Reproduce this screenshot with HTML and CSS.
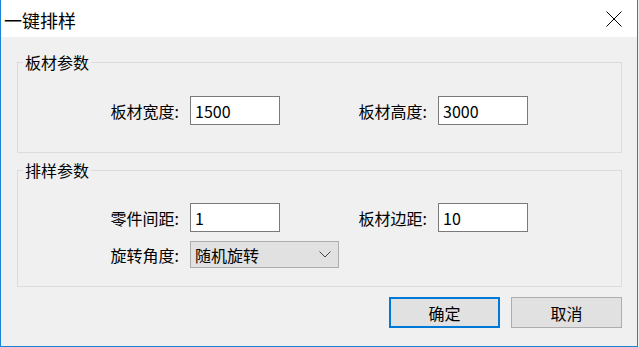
FILE: index.html
```html
<!DOCTYPE html>
<html lang="zh-CN">
<head>
<meta charset="UTF-8" />
<title>一键排样</title>
<link rel="stylesheet" href="styles.css">
</head>
<body>

<div class="window">
  <div class="titlebar">
    <span class="title">一键排样</span>
    <button class="close" aria-label="关闭">
      <svg width="16" height="16" viewBox="0 0 16 16">
        <path d="M0.5 0.5 L15.5 15.5 M15.5 0.5 L0.5 15.5" stroke="#000" stroke-width="1" fill="none" />
      </svg>
    </button>
  </div>

  <div class="content">
    <fieldset class="group group-sheet">
      <legend>板材参数</legend>
      <div class="fields">
        <label for="width">板材宽度:</label>
        <input id="width" type="text" value="1500">
        <label for="height">板材高度:</label>
        <input id="height" type="text" value="3000">
      </div>
    </fieldset>

    <fieldset class="group group-layout">
      <legend>排样参数</legend>
      <div class="fields">
        <label for="gap">零件间距:</label>
        <input id="gap" type="text" value="1">
        <label for="margin">板材边距:</label>
        <input id="margin" type="text" value="10">

        <label for="angle">旋转角度:</label>
        <div class="combo">
          <select id="angle">
            <option>随机旋转</option>
            <option>不旋转</option>
            <option>90度旋转</option>
          </select>
          <!-- dropdown arrow -->
          <svg class="chevron" width="12" height="7" viewBox="0 0 12 7">
            <polyline points="0.5,0.5 6,6 11.5,0.5" stroke="#444" stroke-width="1" fill="none" />
          </svg>
        </div>
      </div>
    </fieldset>

    <div class="actions">
      <button class="btn btn-primary">确定</button>
      <button class="btn">取消</button>
    </div>
  </div>
</div>

</body>
</html>
```

FILE: styles.css
```css
body {
  margin: 0;
  background: #f0f0f0;
  font-family: "Noto Sans CJK SC", "Noto Sans", sans-serif;
  font-size: 16px;
  color: #000;
}
.window {
  width: 638px;
  height: 347px;
  box-sizing: border-box;
  border: 1px solid #1883d7;
  border-top: none;
  background: #f0f0f0;
}
.titlebar {
  height: 37px;
  background: #fff;
  display: flex;
  align-items: center;
  justify-content: space-between;
  padding: 0 15px 0 3px;
}
.title {
  font-size: 18px;
  padding-top: 3px;
}
.close {
  border: none;
  background: none;
  padding: 0;
  width: 16px;
  height: 16px;
  display: flex;
}
.content {
  padding: 16px 15px 0 16px;
}
.group {
  margin: 0;
  border: 1px solid #dcdcdc;
  padding: 25px 0 27px 0;
}
.group legend {
  margin-left: 5px;
  padding: 0 2px;
  line-height: 18px;
}
.group-layout {
  margin-top: 8px;
  padding: 24px 0 18px 0;
}
.fields {
  display: grid;
  grid-template-columns: 172px 90px 158px 90px;
  row-gap: 9px;
  align-items: center;
}
.fields label {
  text-align: right;
  padding-right: 11px;
}
.fields input {
  width: 90px;
  height: 29px;
  box-sizing: border-box;
  border: 1px solid #7a7a7a;
  padding: 0 4px;
  font: inherit;
  background: #fff;
  outline: none;
}
.combo {
  grid-column: span 2;
  position: relative;
  width: 149px;
  height: 27px;
}
.combo select {
  appearance: none;
  -webkit-appearance: none;
  width: 100%;
  height: 100%;
  box-sizing: border-box;
  border: 1px solid #adadad;
  border-radius: 0;
  background: #e1e1e1;
  padding: 0 0 0 4px;
  font: inherit;
  color: #000;
  outline: none;
}
.chevron {
  position: absolute;
  right: 8px;
  top: 10px;
  pointer-events: none;
}
.actions {
  display: flex;
  justify-content: flex-end;
  gap: 11px;
  margin-top: 10px;
}
.btn {
  width: 111px;
  height: 31px;
  box-sizing: border-box;
  border: 1px solid #adadad;
  background: #e1e1e1;
  font: inherit;
  color: #000;
  padding: 0;
}
.btn-primary {
  border: 2px solid #0078d7;
}
```
